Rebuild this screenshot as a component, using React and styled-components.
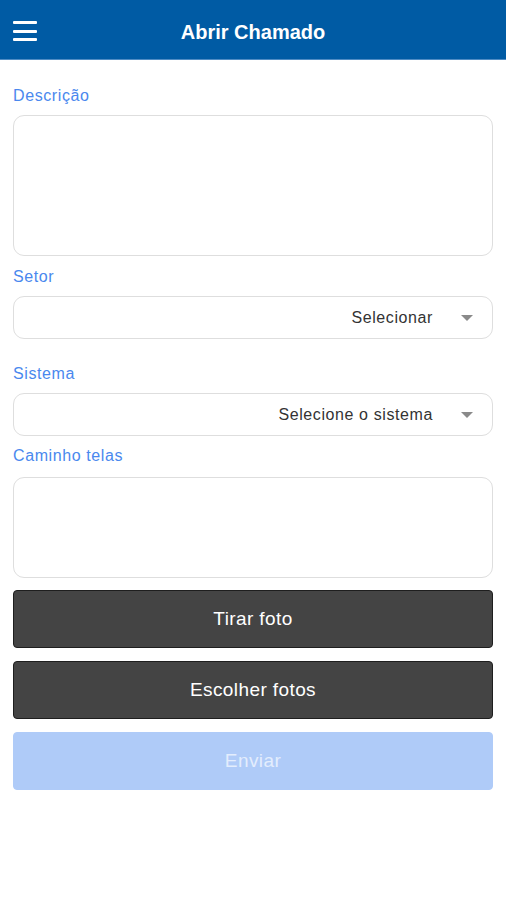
import React from "react";
import styled, { createGlobalStyle } from "styled-components";

const Global = createGlobalStyle`
  html, body { margin: 0; padding: 0; background: #fff; }
  body { font-family: "Liberation Sans", Arial, sans-serif; }
  * { box-sizing: border-box; }
`;

const Page = styled.div`
  width: 506px;
  min-height: 900px;
  background: #fff;
`;

const Header = styled.header`
  height: 60px;
  background: #005ba4;
  border-bottom: 1px solid #4f8cc4;
  display: flex;
  align-items: center;
  position: relative;
  padding-left: 13px;
`;

const MenuButton = styled.div`
  width: 24px;
  height: 20px;
  display: flex;
  flex-direction: column;
  justify-content: space-between;
  margin-top: 3px;
`;

const MenuLine = styled.span`
  display: block;
  height: 3px;
  background: #fff;
  border-radius: 1px;
`;

const Title = styled.h1`
  position: absolute;
  left: 0;
  right: 0;
  text-align: center;
  margin: 0;
  color: #fff;
  font-size: 20px;
  font-weight: 700;
  pointer-events: none;
  top: 21px;
`;

const Form = styled.div`
  display: flex;
  flex-direction: column;
  padding: 26px 13px 0 13px;
`;

const Label = styled.div`
  color: #4a88ee;
  font-size: 16px;
  letter-spacing: 0.6px;
  line-height: 20px;
  margin-top: ${(p) => p.$mt || 0}px;
  margin-bottom: ${(p) => p.$mb || 9}px;
`;

const TextBox = styled.div`
  height: ${(p) => p.$h}px;
  border: 1px solid #dedede;
  border-radius: 11px;
  background: #fff;
`;

const Select = styled.div`
  height: 43px;
  border: 1px solid #dedede;
  border-radius: 11px;
  display: flex;
  align-items: center;
  justify-content: flex-end;
  padding-right: 19px;
  color: #333;
  font-size: 16px;
  letter-spacing: 0.6px;
`;

const Caret = styled.span`
  width: 0;
  height: 0;
  border-left: 6px solid transparent;
  border-right: 6px solid transparent;
  border-top: 6px solid #8a8a8a;
  margin-left: 28px;
`;

const Button = styled.div`
  height: 58px;
  border-radius: 4px;
  display: flex;
  align-items: center;
  justify-content: center;
  font-size: 19px;
  letter-spacing: 0.4px;
  margin-top: ${(p) => p.$mt}px;
  background: ${(p) => (p.$disabled ? "#afcbf8" : "#444444")};
  border: 1px solid ${(p) => (p.$disabled ? "#afcbf8" : "#1e1e1e")};
  color: ${(p) => (p.$disabled ? "#e3edfd" : "#ffffff")};
`;

export default function App() {
  return (
    <Page>
      <Global />
      <Header>
        <MenuButton>
          <MenuLine />
          <MenuLine />
          <MenuLine />
        </MenuButton>
        <Title>Abrir Chamado</Title>
      </Header>
      <Form>
        <Label>Descrição</Label>
        <TextBox $h={141} />
        <Label $mt={11} $mb={9}>Setor</Label>
        <Select>
          Selecionar
          <Caret />
        </Select>
        <Label $mt={25} $mb={9}>Sistema</Label>
        <Select>
          Selecione o sistema
          <Caret />
        </Select>
        <Label $mt={10} $mb={11}>Caminho telas</Label>
        <TextBox $h={101} />
        <Button $mt={12}>Tirar foto</Button>
        <Button $mt={13}>Escolher fotos</Button>
        <Button $mt={13} $disabled>Enviar</Button>
      </Form>
    </Page>
  );
}
